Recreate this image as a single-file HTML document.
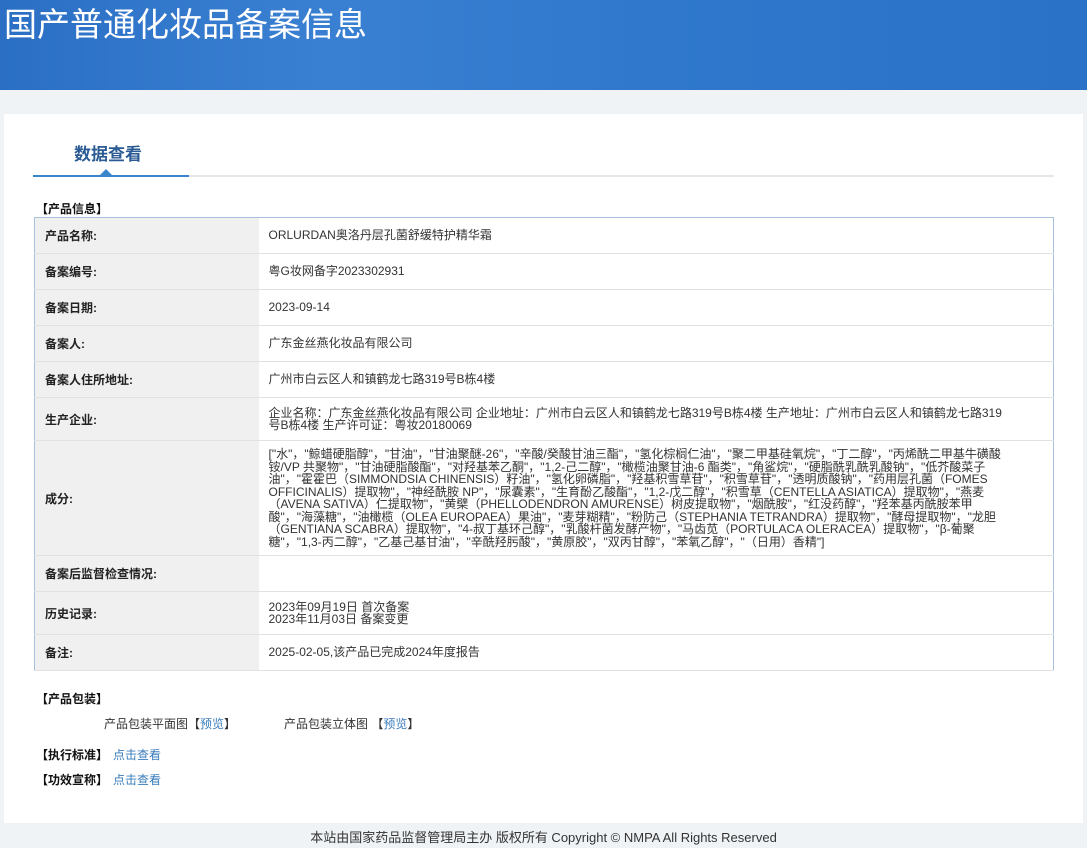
<!DOCTYPE html>
<html><head><meta charset="utf-8"><style>
*{margin:0;padding:0;box-sizing:border-box}
body{width:1087px;height:848px;overflow:hidden;background:#eff3f6;font-family:"Liberation Sans","Noto Sans CJK SC",sans-serif;font-size:12px;color:#333;position:relative}
.hdr{position:absolute;left:0;top:0;width:1087px;height:90px;background:linear-gradient(90deg,#2a6fc4 0%,#3a80d2 30%,#2f78cc 60%,#2a72c8 100%)}
.hdr h1{position:absolute;left:4px;top:2px;font-size:33px;font-weight:normal;color:#fff;line-height:46px}
.panel{position:absolute;left:4px;top:114px;width:1079px;height:709px;background:#fff}
.tab{position:absolute;left:74px;top:140px;font-size:17px;font-weight:bold;color:#2a5a94}
.tabline{position:absolute;left:33px;top:175px;width:1021px;height:2px;background:#e6e6e6}
.tabact{position:absolute;left:33px;top:175px;width:156px;height:2px;background:#3a86cc}
.tri{position:absolute;left:100px;top:169px;width:0;height:0;border-left:6px solid transparent;border-right:6px solid transparent;border-bottom:6px solid #3a86cc}
.sec{position:absolute;font-weight:bold;color:#111;font-size:12px}
table{position:absolute;left:34px;top:217px;width:1020px;border-collapse:collapse;border:1px solid #a9c0dc}
td{border-bottom:1px solid #e2e2e2;vertical-align:middle}
td.l{width:224px;background:#f0f0f0;font-weight:bold;padding-left:10px;color:#222}
td.v{padding:0 48px 0 10px;font-size:12px;line-height:12.5px;color:#333}
a{color:#3a7cbc;text-decoration:none}
.foot{position:absolute;left:0;width:1087px;top:827px;text-align:center;font-size:13px;color:#333}
</style></head><body>
<div class="hdr"><h1>国产普通化妆品备案信息</h1></div>
<div class="panel"></div>
<div class="tab">数据查看</div>
<div class="tabline"></div><div class="tabact"></div><div class="tri"></div>
<div class="sec" style="left:36px;top:200px">【产品信息】</div>
<table>
<tr style="height:36px"><td class="l">产品名称:</td><td class="v">ORLURDAN奥洛丹层孔菌舒缓特护精华霜</td></tr>
<tr style="height:36px"><td class="l">备案编号:</td><td class="v">粤G妆网备字2023302931</td></tr>
<tr style="height:36px"><td class="l">备案日期:</td><td class="v">2023-09-14</td></tr>
<tr style="height:36px"><td class="l">备案人:</td><td class="v">广东金丝燕化妆品有限公司</td></tr>
<tr style="height:36px"><td class="l">备案人住所地址:</td><td class="v">广州市白云区人和镇鹤龙七路319号B栋4楼</td></tr>
<tr style="height:43px"><td class="l">生产企业:</td><td class="v">企业名称：广东金丝燕化妆品有限公司 企业地址：广州市白云区人和镇鹤龙七路319号B栋4楼 生产地址：广州市白云区人和镇鹤龙七路319号B栋4楼 生产许可证：粤妆20180069</td></tr>
<tr style="height:115px"><td class="l">成分:</td><td class="v">["水"，"鲸蜡硬脂醇"，"甘油"，"甘油聚醚-26"，"辛酸/癸酸甘油三酯"，"氢化棕榈仁油"，"聚二甲基硅氧烷"，"丁二醇"，"丙烯酰二甲基牛磺酸铵/VP 共聚物"，"甘油硬脂酸酯"，"对羟基苯乙酮"，"1,2-己二醇"，"橄榄油聚甘油-6 酯类"，"角鲨烷"，"硬脂酰乳酰乳酸钠"，"低芥酸菜子油"，"霍霍巴（SIMMONDSIA CHINENSIS）籽油"，"氢化卵磷脂"，"羟基积雪草苷"，"积雪草苷"，"透明质酸钠"，"药用层孔菌（FOMES OFFICINALIS）提取物"，"神经酰胺 NP"，"尿囊素"，"生育酚乙酸酯"，"1,2-戊二醇"，"积雪草（CENTELLA ASIATICA）提取物"，"燕麦（AVENA SATIVA）仁提取物"，"黄檗（PHELLODENDRON AMURENSE）树皮提取物"，"烟酰胺"，"红没药醇"，"羟苯基丙酰胺苯甲酸"，"海藻糖"，"油橄榄（OLEA EUROPAEA）果油"，"麦芽糊精"，"粉防己（STEPHANIA TETRANDRA）提取物"，"酵母提取物"，"龙胆（GENTIANA SCABRA）提取物"，"4-叔丁基环己醇"，"乳酸杆菌发酵产物"，"马齿苋（PORTULACA OLERACEA）提取物"，"β-葡聚糖"，"1,3-丙二醇"，"乙基己基甘油"，"辛酰羟肟酸"，"黄原胶"，"双丙甘醇"，"苯氧乙醇"，"（日用）香精"]</td></tr>
<tr style="height:36px"><td class="l">备案后监督检查情况:</td><td class="v"></td></tr>
<tr style="height:43px"><td class="l">历史记录:</td><td class="v">2023年09月19日 首次备案<br>2023年11月03日 备案变更</td></tr>
<tr style="height:36px"><td class="l">备注:</td><td class="v">2025-02-05,该产品已完成2024年度报告</td></tr>
</table>
<div class="sec" style="left:36px;top:690px">【产品包装】</div>
<div style="position:absolute;left:104px;top:715px">产品包装平面图【<a>预览</a>】</div>
<div style="position:absolute;left:284px;top:715px">产品包装立体图 【<a>预览</a>】</div>
<div class="sec" style="left:36px;top:746px">【执行标准】</div><a style="position:absolute;left:113px;top:746px">点击查看</a>
<div class="sec" style="left:36px;top:771px">【功效宣称】</div><a style="position:absolute;left:113px;top:771px">点击查看</a>
<div class="foot">本站由国家药品监督管理局主办 版权所有 Copyright © NMPA All Rights Reserved</div>
</body></html>
